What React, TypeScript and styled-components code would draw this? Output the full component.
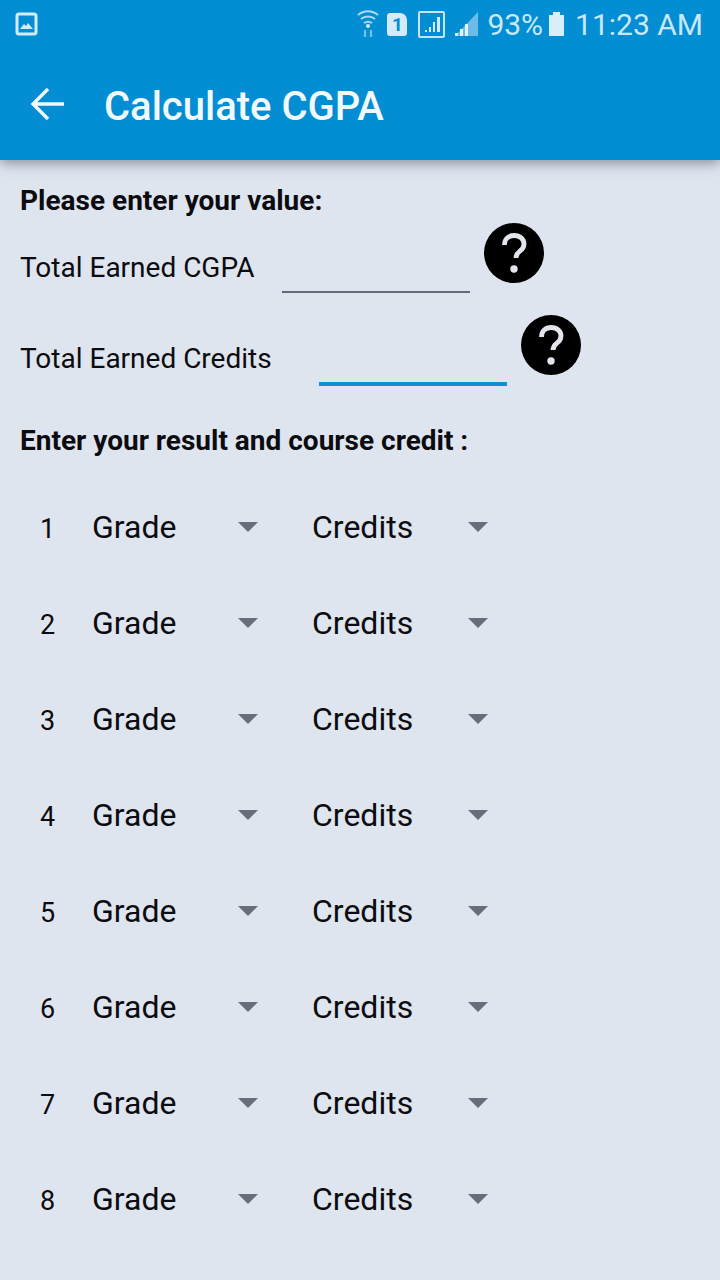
import React from 'react'
import styled, { createGlobalStyle } from 'styled-components'

const GlobalStyle = createGlobalStyle`
  html, body {
    margin: 0;
    padding: 0;
    background: #dfe5ef;
    font-family: Roboto, "Liberation Sans", sans-serif;
  }
`

const rows = [1, 2, 3, 4, 5, 6, 7, 8]

const HelpIcon = () => (
  <HelpCircle>
    <svg width="60" height="60" viewBox="0 0 60 60">
      <circle cx="30" cy="30" r="30" fill="#000" />
      <path
        d="M20.5 22c0-6 4-9.5 9.8-9.5 5.6 0 9.7 3.4 9.7 8.4 0 3.6-1.9 5.6-4.4 7.5-2.6 2-3.6 3.1-3.6 6.6"
        fill="none"
        stroke="#e2e5ec"
        strokeWidth="4.8"
      />
      <circle cx="30" cy="46" r="3.7" fill="#e2e5ec" />
    </svg>
  </HelpCircle>
)

const App = () => (
  <Page>
    <GlobalStyle />
    <Header>
      <StatusBar>
        <svg width="24" height="24" viewBox="0 0 24 24">
          <rect x="2" y="2" width="19" height="20" rx="2" fill="none" stroke="#d4ebfa" strokeWidth="3" />
          <path d="M5 17l4-5 2 2 2-3 5 6z" fill="#d4ebfa" />
        </svg>
        <StatusRight>
          <svg width="24" height="28" viewBox="0 0 24 28">
            <g fill="none" stroke="#a9dcf5" strokeWidth="2">
              <path d="M2 5c6-5 14-5 20 0" />
              <path d="M5 9c4-3.5 10-3.5 14 0" />
              <path d="M8 13c3-2 5-2 8 0" />
            </g>
            <circle cx="12" cy="16" r="2" fill="#d4ebfa" />
            <path d="M9 20v7M15 20v7" stroke="#73c0ea" strokeWidth="2.2" />
          </svg>
          <Sim>1</Sim>
          <svg width="27" height="27" viewBox="0 0 27 27">
            <rect x="1" y="1" width="25" height="25" rx="1" fill="none" stroke="#c5e5f8" strokeWidth="2" />
            <path d="M7 19h2v2H7zM11 16h2v5h-2zM15 11h2v10h-2zM19 6h3v15h-3z" fill="#d4ebfa" />
          </svg>
          <SignalIcon width="23" height="24" viewBox="0 0 23 24">
            <path d="M23 0v24H0z" fill="#6dbce8" />
            <path d="M0 24h3v-3H0zM5 24h3v-7H5zM10 24h3V12h-3z" fill="#e0f2fc" />
          </SignalIcon>
          <StatusText>93%</StatusText>
          <Battery />
          <StatusText>11:23 AM</StatusText>
        </StatusRight>
      </StatusBar>
      <Toolbar>
        <svg width="36" height="36" viewBox="0 0 36 36">
          <path d="M34 18H4M18 3L3 18l15 15" fill="none" stroke="#f1f9fe" strokeWidth="3.4" />
        </svg>
        <Title>Calculate CGPA</Title>
      </Toolbar>
    </Header>
    <Content>
      <Heading>Please enter your value:</Heading>
      <FieldRow>
        <FieldLabel>Total Earned CGPA</FieldLabel>
        <FieldInput />
        <HelpIcon />
      </FieldRow>
      <FieldRow $second>
        <FieldLabel $second>Total Earned Credits</FieldLabel>
        <FieldInput $focused />
        <HelpIcon />
      </FieldRow>
      <SectionHeading>Enter your result and course credit :</SectionHeading>
      <CourseList>
        {rows.map(n => (
          <CourseRow key={n}>
            <RowNumber>{n}</RowNumber>
            <Select $width={166}>
              Grade
              <Caret />
            </Select>
            <Select $width={176}>
              Credits
              <Caret />
            </Select>
          </CourseRow>
        ))}
      </CourseList>
    </Content>
  </Page>
)

const Page = styled.div`
  width: 720px;
  height: 1280px;
  overflow: hidden;
  background: #dfe5ef;
  color: #0c0c10;
`

const Header = styled.header`
  height: 160px;
  background: #038dd2;
  box-shadow: 0 3px 12px rgba(60, 70, 85, 0.55);
  position: relative;
`

const StatusBar = styled.div`
  height: 48px;
  display: flex;
  align-items: center;
  justify-content: space-between;
  padding: 0 17px 0 15px;
`

const StatusRight = styled.div`
  display: flex;
  align-items: center;
`

const Sim = styled.span`
  width: 20px;
  height: 23px;
  margin: 0 11px 0 7px;
  background: #d4ebfa;
  border-radius: 3px 7px 3px 3px;
  color: #038dd2;
  font-size: 19px;
  font-weight: 700;
  line-height: 23px;
  text-align: center;
`

const SignalIcon = styled.svg`
  margin: 0 9px 0 10px;
`

const StatusText = styled.span`
  color: #c9e8fa;
  font-size: 30px;
  line-height: 48px;
  margin-top: 2px;
`

const Battery = styled.span`
  width: 15px;
  height: 21px;
  margin: 3px 11px 0 6px;
  background: #d9eefb;
  position: relative;
  &::before {
    content: '';
    position: absolute;
    top: -3px;
    left: 4px;
    width: 7px;
    height: 3px;
    background: #d9eefb;
  }
`

const Toolbar = styled.div`
  height: 112px;
  display: flex;
  align-items: center;
  padding-left: 30px;
  box-sizing: border-box;
`

const Title = styled.h1`
  margin: 4px 0 0 38px;
  color: #f1f9fe;
  font-size: 40px;
  font-weight: 500;
`

const Content = styled.main`
  padding: 25px 0 0 20px;
`

const Heading = styled.h2`
  margin: 0;
  font-size: 28px;
  font-weight: 700;
  line-height: 32px;
`

const SectionHeading = styled(Heading)`
  margin-top: 50px;
`

const FieldRow = styled.div<{ $second?: boolean }>`
  display: flex;
  align-items: flex-start;
  height: 60px;
  margin-top: ${props => (props.$second ? '32px' : '6px')};
`

const FieldLabel = styled.label<{ $second?: boolean }>`
  font-size: 28px;
  line-height: 32px;
  margin-top: ${props => (props.$second ? '28px' : '29px')};
  white-space: nowrap;
`

const FieldInput = styled.div<{ $focused?: boolean }>`
  width: 188px;
  height: ${props => (props.$focused ? '4px' : '2px')};
  margin: ${props => (props.$focused ? '67px 14px 0 47px' : '68px 14px 0 27px')};
  background: ${props => (props.$focused ? '#128fd3' : '#646a78')};
`

const HelpCircle = styled.span`
  display: block;
  width: 60px;
  height: 60px;
`

const CourseList = styled.div`
  margin-top: 22px;
`

const CourseRow = styled.div`
  display: flex;
  align-items: center;
  height: 96px;
`

const RowNumber = styled.span`
  width: 72px;
  padding: 3px 0 0 20px;
  box-sizing: border-box;
  font-size: 27px;
`

const Select = styled.div<{ $width: number }>`
  width: ${props => props.$width}px;
  margin-right: 54px;
  display: flex;
  align-items: center;
  justify-content: space-between;
  font-size: 32px;
`

const Caret = styled.span`
  border-left: 10px solid transparent;
  border-right: 10px solid transparent;
  border-top: 10px solid #686d7a;
`

export default App
